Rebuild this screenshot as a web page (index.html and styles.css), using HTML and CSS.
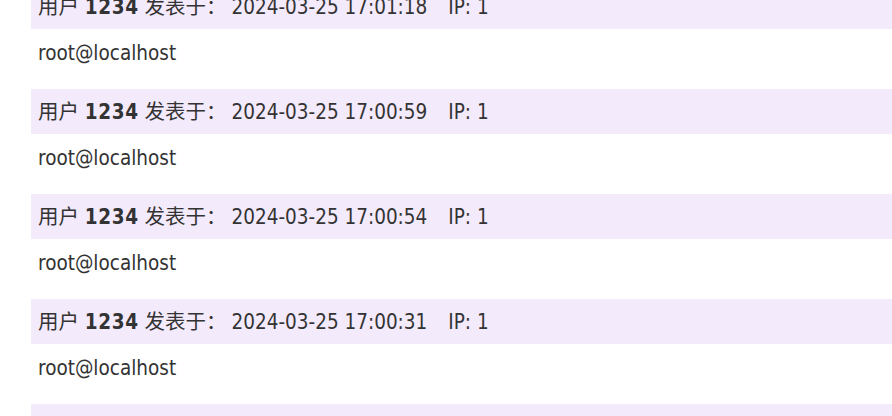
FILE: index.html
```html
<!DOCTYPE html>
<html lang="zh">
<head>
<meta charset="utf-8">
<title>留言列表</title>
<link rel="stylesheet" href="styles.css">
</head>
<body>
<div class="list">
  <div class="post">
    <div class="post-head">用户 <b>1234</b> 发表于：<span class="time">2024-03-25 17:01:18</span><span class="ip">IP: 1</span></div>
    <div class="post-body">root@localhost</div>
  </div>
  <div class="post">
    <div class="post-head">用户 <b>1234</b> 发表于：<span class="time">2024-03-25 17:00:59</span><span class="ip">IP: 1</span></div>
    <div class="post-body">root@localhost</div>
  </div>
  <div class="post">
    <div class="post-head">用户 <b>1234</b> 发表于：<span class="time">2024-03-25 17:00:54</span><span class="ip">IP: 1</span></div>
    <div class="post-body">root@localhost</div>
  </div>
  <div class="post">
    <div class="post-head">用户 <b>1234</b> 发表于：<span class="time">2024-03-25 17:00:31</span><span class="ip">IP: 1</span></div>
    <div class="post-body">root@localhost</div>
  </div>
  <div class="post">
    <div class="post-head">用户 <b>1234</b> 发表于：<span class="time">2024-03-25 17:00:12</span><span class="ip">IP: 1</span></div>
    <div class="post-body">root@localhost</div>
  </div>
</div>
</body>
</html>
```
FILE: styles.css
```css
html, body {
  margin: 0;
  padding: 0;
  background: #ffffff;
  overflow: hidden;
}
body {
  font-family: "DejaVu Sans Condensed", "DejaVu Sans", "Noto Sans CJK SC", sans-serif;
  font-size: 20.5px;
  color: #333333;
}
.list {
  margin-top: -16px;
  padding-left: 31px;
}
.post-head {
  height: 45px;
  box-sizing: border-box;
  padding: 2px 0 0 7px;
  line-height: 43px;
  background: #f3eafc;
  white-space: nowrap;
}
.post-head b {
  font-weight: bold;
  letter-spacing: 0.6px;
}
.time {
  margin-left: 5px;
}
.ip {
  margin-left: 21px;
}
.post-body {
  height: 60px;
  box-sizing: border-box;
  padding: 13px 0 0 7px;
  line-height: 22px;
}
```
